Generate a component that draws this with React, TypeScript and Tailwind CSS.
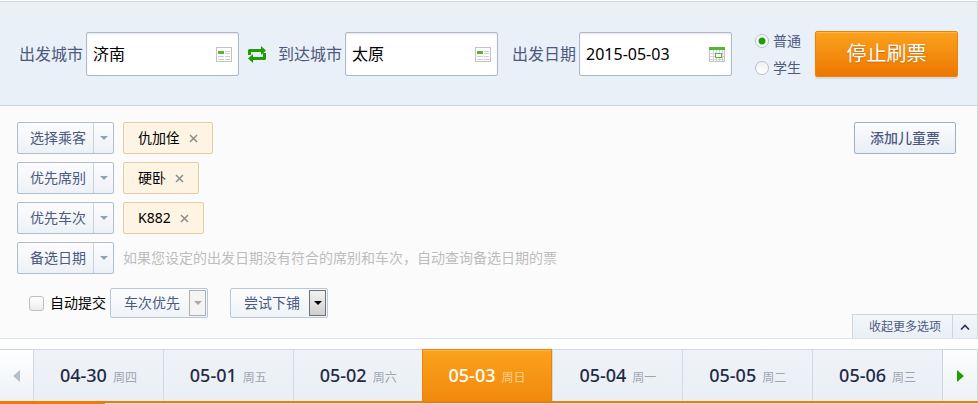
import { useState, type ReactNode } from "react";

const days = [
  { date: "04-30", week: "周四" },
  { date: "05-01", week: "周五" },
  { date: "05-02", week: "周六" },
  { date: "05-03", week: "周日" },
  { date: "05-04", week: "周一" },
  { date: "05-05", week: "周二" },
  { date: "05-06", week: "周三" },
];

function ListIcon() {
  return (
    <svg width="16" height="15" viewBox="0 0 16 15" shapeRendering="crispEdges" aria-hidden="true">
      <rect x="0.5" y="0.5" width="15" height="14" fill="#fff" stroke="#c3c3c3" />
      <rect x="2" y="4" width="6" height="3" fill="#57b536" />
      <path d="M9 4.5h5M9 6.5h5M2 9.5h6M9 9.5h5M2 12.5h6M9 12.5h5" stroke="#cfcfcf" />
    </svg>
  );
}

function CalendarIcon() {
  return (
    <svg width="16" height="15" viewBox="0 0 16 15" shapeRendering="crispEdges" aria-hidden="true">
      <rect x="0.5" y="0.5" width="15" height="14" fill="#fff" stroke="#c3c3c3" />
      <path d="M4.5 3v11M7.5 3v11M10.5 3v11M13.5 3v11M1 6.5h14M1 9.5h14M1 12.5h14" stroke="#d2d2d2" />
      <rect width="16" height="3" fill="#57b536" />
      <rect x="6.5" y="6.5" width="6" height="4" fill="#fff" stroke="#57b536" />
    </svg>
  );
}

function SwapIcon() {
  return (
    <svg width="18" height="17" viewBox="0 0 18 17" aria-hidden="true">
      <path d="M1.5 9V4.5h12M16.5 7v5.5H5" fill="none" stroke="#1d9f04" strokeWidth="3" strokeLinejoin="round" />
      <path d="M13 0l5 4.5L13 9zM5 8l-5 4.5L5 17z" fill="#1d9f04" />
    </svg>
  );
}

function Caret({ className }: { className: string }) {
  return (
    <svg width="8" height="4" viewBox="0 0 8 4" className={className} aria-hidden="true">
      <path d="M0 0h8L4 4z" fill="currentColor" />
    </svg>
  );
}

function Field({ id, label, value, icon }: { id: string; label: string; value: string; icon: ReactNode }) {
  return (
    <div className="flex items-center gap-[3px]">
      <label htmlFor={id} className="shrink-0 text-base text-[#4c5a80]">
        {label}
      </label>
      <div className="flex h-11 w-[153px] items-center rounded-[2px] border border-[#b0b9cc] bg-white pr-[6px] pl-[6px] shadow-[inset_0_1px_2px_#e3e3e3]">
        <input id={id} defaultValue={value} className="min-w-0 flex-1 bg-transparent text-base text-black outline-none" />
        {icon}
      </div>
    </div>
  );
}

function Radio({ label, checked, onPick }: { label: string; checked: boolean; onPick: () => void }) {
  return (
    <label className="flex h-[27px] items-center gap-1 text-sm text-[#4c5a80]">
      <input
        type="radio"
        name="ticket"
        checked={checked}
        onChange={onPick}
        className="size-[14px] appearance-none rounded-full border border-[#b9c0cc] bg-linear-to-b from-[#f1f1f1] to-white checked:bg-[radial-gradient(circle,#1d9f04_3px,#f8f8f8_4px)]"
      />
      {label}
    </label>
  );
}

function Option({ label, children }: { label: string; children: ReactNode }) {
  return (
    <div className="flex items-center gap-[9px]">
      <button
        type="button"
        aria-haspopup="listbox"
        className="flex h-8 w-[97px] shrink-0 items-stretch rounded-[2px] border border-[#b0bfcc] bg-linear-to-b from-[#fcfcfd] to-[#edf1f6] text-sm text-[#4c5a80]"
      >
        <span className="flex flex-1 items-center pl-3">{label}</span>
        <span className="flex w-5 items-center justify-center border-l border-[#c8d2dc]">
          <Caret className="text-[#91a4b4]" />
        </span>
      </button>
      {children}
    </div>
  );
}

function Tag({ text }: { text: string }) {
  return (
    <span className="flex h-8 items-center gap-[9px] rounded-[2px] border border-[#e2cf9d] bg-[#fef4e4] px-[14px] text-sm text-black">
      {text}
      <button type="button" aria-label={`删除 ${text}`}>
        <svg width="9" height="9" viewBox="0 0 9 9" aria-hidden="true">
          <path d="M1 1l7 7M8 1l-7 7" stroke="#8c8c8c" strokeWidth="1.5" />
        </svg>
      </button>
    </span>
  );
}

function Dropdown({ name, value, other, muted }: { name: string; value: string; other: string; muted?: boolean }) {
  return (
    <div className="relative h-[30px] w-[98px]">
      <select
        aria-label={name}
        className="size-full appearance-none rounded-[2px] border border-[#b8c8d6] bg-linear-to-b from-[#fcfcfd] to-[#eff3f7] pl-[13px] text-sm text-[#4c5a80]"
      >
        <option>{value}</option>
        <option>{other}</option>
      </select>
      <span
        className={`pointer-events-none absolute top-[2px] right-[2px] flex h-[26px] w-[17px] items-center justify-center border ${
          muted ? "border-[#b0b0b0] bg-[#f4f4f4] text-[#a9a9a9]" : "border-[#707070] bg-linear-to-b from-[#f2f2f2] to-[#cfcfcf] text-black"
        }`}
      >
        <Caret className="" />
      </span>
    </div>
  );
}

export default function App() {
  const [ticket, setTicket] = useState("普通");
  const [day, setDay] = useState("05-03");

  return (
    <div className="min-h-screen bg-white pt-px font-['Noto_Sans','Noto_Sans_CJK_SC',sans-serif]">
      <form className="border-r border-[#cdd6df]" onSubmit={(e) => e.preventDefault()}>
        <div className="flex items-center border-y border-[#cdd6df] bg-[#eaf0f7] pt-[25px] pr-[19px] pb-6 pl-[19px]">
          <Field id="from" label="出发城市" value="济南" icon={<ListIcon />} />
          <button type="button" aria-label="交换城市" className="mr-3 ml-[9px]">
            <SwapIcon />
          </button>
          <Field id="to" label="到达城市" value="太原" icon={<ListIcon />} />
          <div className="ml-[14px]">
            <Field id="date" label="出发日期" value="2015-05-03" icon={<CalendarIcon />} />
          </div>
          <div className="ml-auto flex flex-col">
            <Radio label="普通" checked={ticket === "普通"} onPick={() => setTicket("普通")} />
            <Radio label="学生" checked={ticket === "学生"} onPick={() => setTicket("学生")} />
          </div>
          <button
            type="submit"
            className="ml-[14px] h-[46px] w-[143px] shrink-0 rounded-[2px] border border-[#ee8208] bg-linear-to-b from-[#fba21b] to-[#ec7700] text-xl text-white shadow-[0_2px_1px_#d5dbe5,inset_0_1px_0_#fdb64e] text-shadow-[0_1px_1px_#c86a00]"
          >
            停止刷票
          </button>
        </div>

        <div className="border-b border-[#dbe3e9] bg-[#fbfbfb] pt-4">
          <div className="flex items-start justify-between pr-[21px] pl-[17px]">
            <div className="flex flex-col gap-2">
              <Option label="选择乘客">
                <Tag text="仇加佺" />
              </Option>
              <Option label="优先席别">
                <Tag text="硬卧" />
              </Option>
              <Option label="优先车次">
                <Tag text="K882" />
              </Option>
              <Option label="备选日期">
                <span className="text-sm text-[#bdbdbd]">如果您设定的出发日期没有符合的席别和车次，自动查询备选日期的票</span>
              </Option>
            </div>
            <button
              type="button"
              className="h-8 w-[102px] shrink-0 rounded-[2px] border border-[#9fb1c1] bg-linear-to-b from-[#fcfcfd] to-[#e9eff5] text-sm font-medium text-[#4c5a80]"
            >
              添加儿童票
            </button>
          </div>

          <div className="flex items-start pt-[14px] pl-[29px]">
            <label className="flex h-[30px] items-center gap-[6px] pr-1 text-sm text-black">
              <input
                type="checkbox"
                className="size-[15px] appearance-none rounded-[3px] border border-[#b9bfc9] bg-linear-to-b from-white to-[#ececec] checked:bg-[#1d9f04]"
              />
              自动提交
            </label>
            <Dropdown name="优先方式" value="车次优先" other="席别优先" muted />
            <div className="ml-[22px]">
              <Dropdown name="铺位" value="尝试下铺" other="只要下铺" />
            </div>
            <button
              type="button"
              className="mt-[26px] ml-auto flex h-6 items-stretch border-t border-l border-[#cdd6df] bg-linear-to-b from-[#f3f6f9] to-[#e9eff5] text-xs text-[#4c5a80]"
            >
              <span className="flex items-center pr-[11px] pl-4">收起更多选项</span>
              <span className="flex w-[25px] items-center justify-center border-l border-[#cdd6df]">
                <svg width="10" height="6" viewBox="0 0 10 6" aria-hidden="true">
                  <path d="M1 5.5L5 1.5l4 4" fill="none" stroke="#27304d" strokeWidth="1.6" />
                </svg>
              </span>
            </button>
          </div>
        </div>
      </form>

      <nav className="mt-[10px] flex h-[54px] border-b-2 border-[#ee7c06]" aria-label="日期">
        <button
          type="button"
          aria-label="前一天"
          className="flex w-[33px] items-center justify-center border-t border-[#cdd6df] bg-linear-to-b from-white to-[#edf1f5]"
        >
          <svg width="7" height="12" viewBox="0 0 7 12" aria-hidden="true">
            <path d="M7 0v12L0 6z" fill="#b4c1cb" />
          </svg>
        </button>
        {days.map(({ date, week }) => {
          const active = date === day;
          return (
            <button
              key={date}
              type="button"
              aria-pressed={active}
              onClick={() => setDay(date)}
              className={`flex flex-1 items-baseline justify-center gap-[6px] border-t pt-[13px] text-lg leading-6 font-medium ${
                active
                  ? "z-10 -ml-px border-x border-[#ee8208] bg-linear-to-b from-[#fba21b] to-[#f1890e] text-white shadow-[inset_0_1px_0_#fdb64e]"
                  : "border-l border-[#d2d9e2] bg-linear-to-b from-[#eff3f7] to-[#eaeff5] text-[#1f2a48]"
              }`}
            >
              {date}
              <span className={`text-xs font-normal ${active ? "text-[#fcd08c]" : "text-[#9ea5b2]"}`}>{week}</span>
            </button>
          );
        })}
        <button
          type="button"
          aria-label="后一天"
          className="flex w-9 items-center justify-center border-x border-t border-[#cdd6df] bg-linear-to-b from-[#fcfdfd] to-[#edf1f5]"
        >
          <svg width="7" height="12" viewBox="0 0 7 12" aria-hidden="true">
            <path d="M0 0v12l7-6z" fill="#1d9f04" />
          </svg>
        </button>
      </nav>
      <div className="h-px bg-[#d5dfe8]">
        <div className="h-px w-[105px] bg-[#ee7c06]" />
      </div>
    </div>
  );
}
